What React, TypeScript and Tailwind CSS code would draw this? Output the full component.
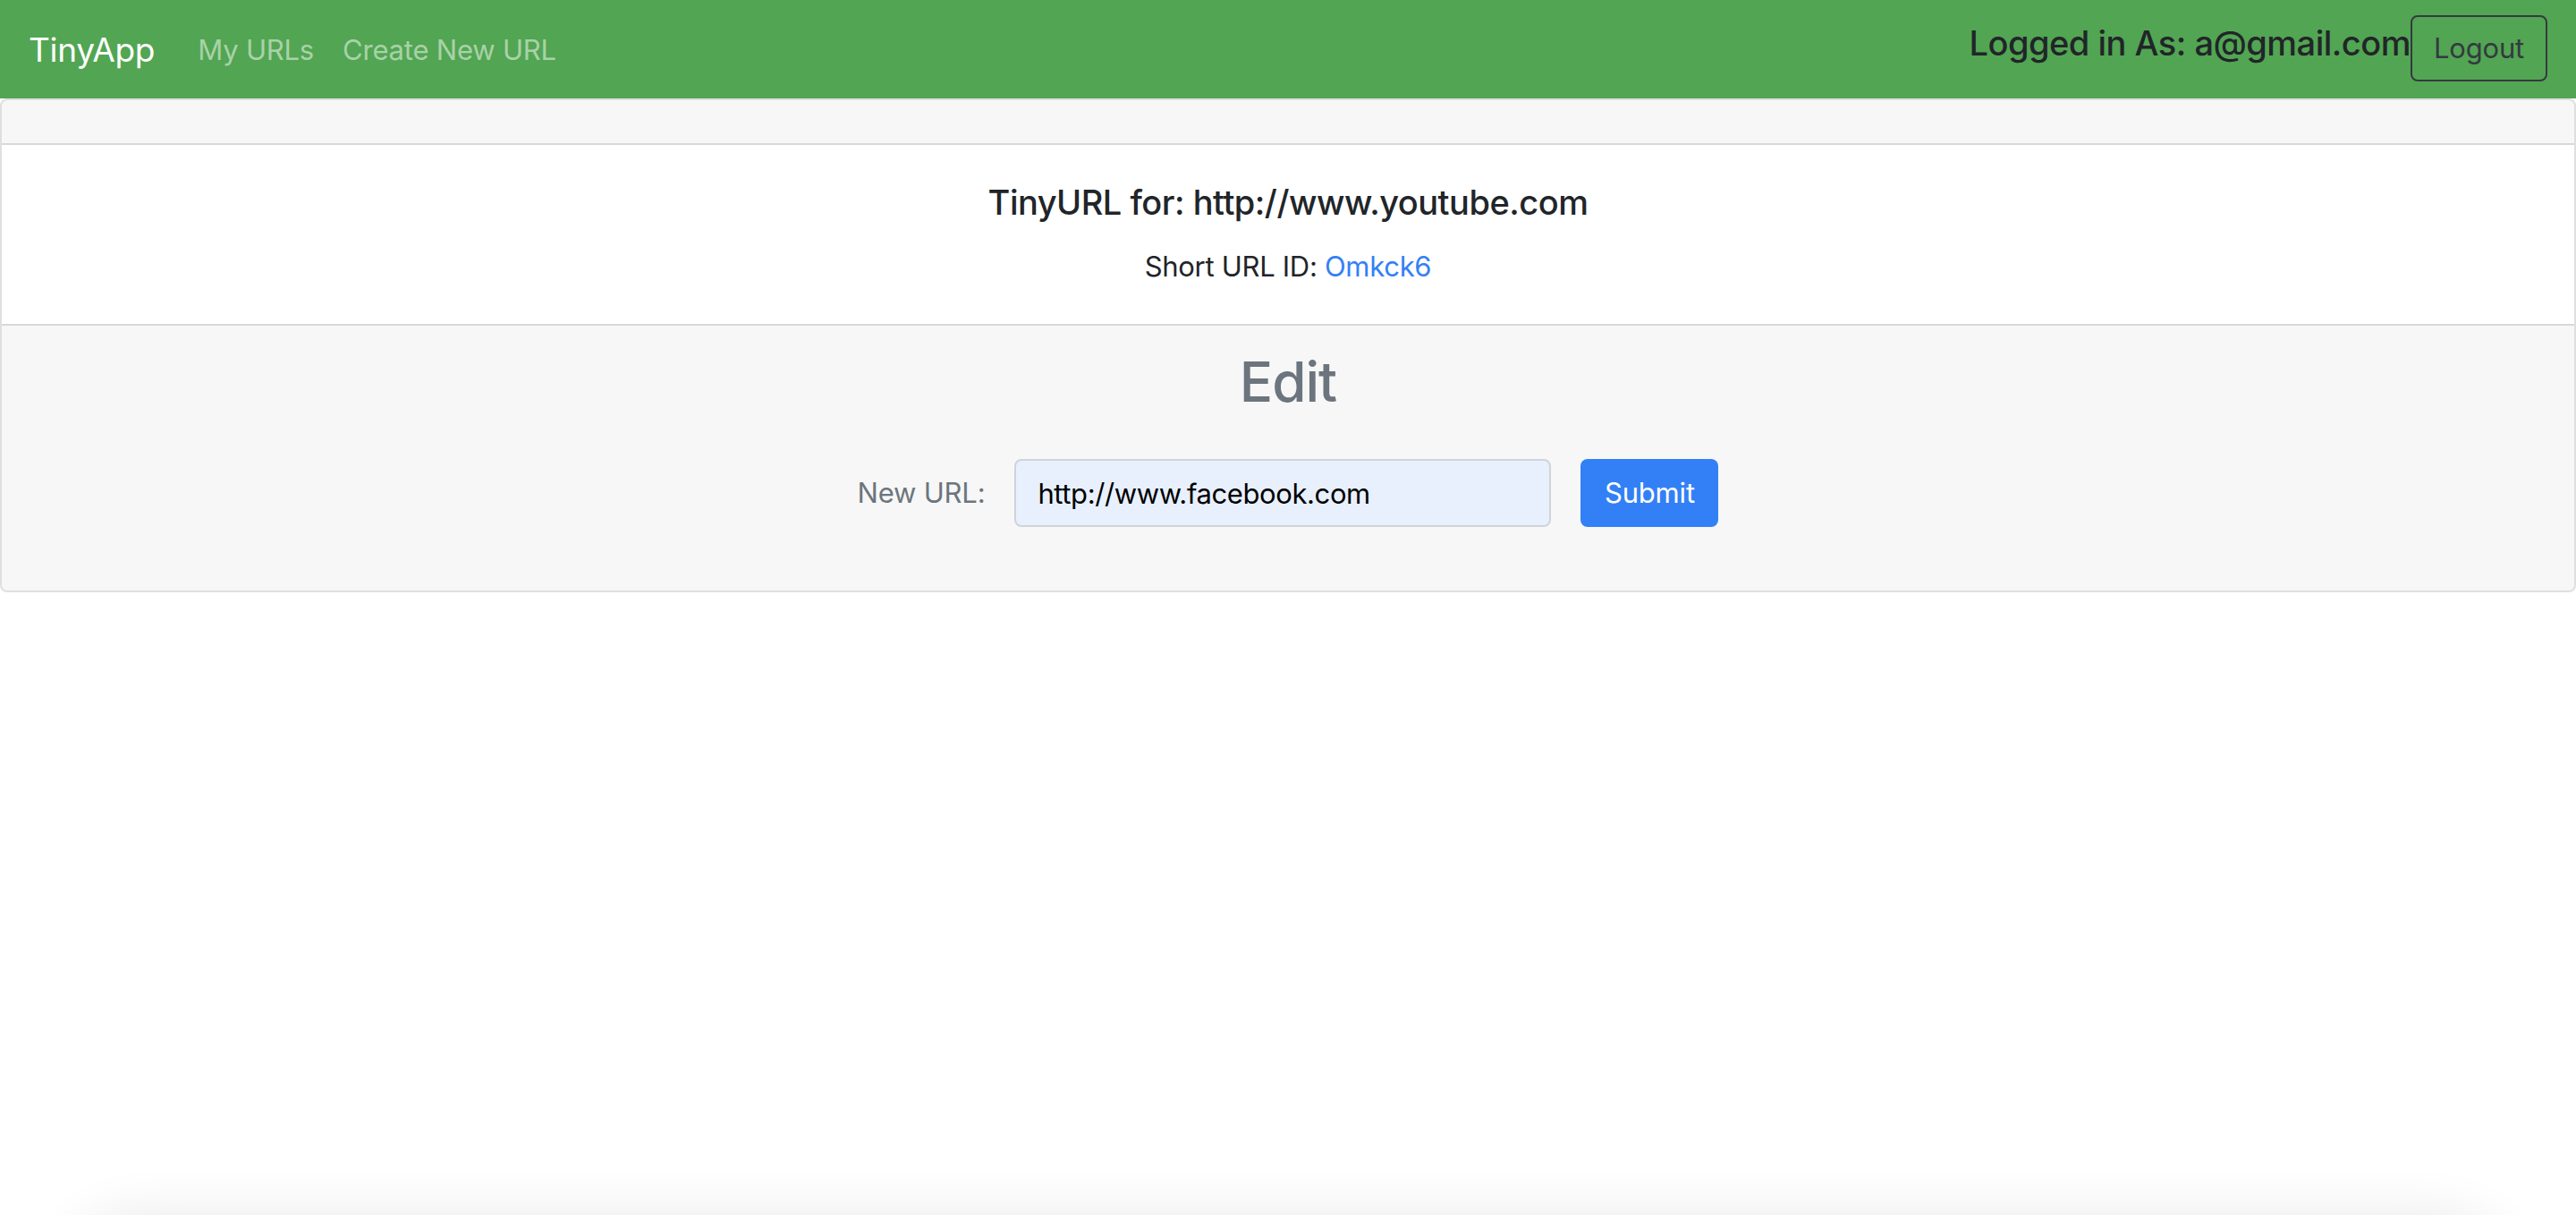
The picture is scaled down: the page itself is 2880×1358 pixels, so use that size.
import React from "react";

export default function App() {
  return (
    <div className="min-h-screen bg-white font-[Inter,sans-serif] text-[#212529]">
      <nav className="flex h-[110px] items-center justify-between bg-[#52a552] px-[32px]">
        <div className="flex items-center">
          <a className="mr-[32px] mt-[2px] text-[37px] leading-[1.5] tracking-[-0.3px] text-white" href="#">
            TinyApp
          </a>
          <a className="mt-[3px] px-[16px] text-[31px] leading-[1.5] tracking-[-0.2px] text-white/50" href="#">
            My URLs
          </a>
          <a className="mt-[3px] px-[16px] text-[31px] leading-[1.5] tracking-[-0.2px] text-white/50" href="#">
            Create New URL
          </a>
        </div>
        <div className="flex items-center">
          <h5 className="mb-[12px] text-[38px] font-medium leading-[1.2] tracking-[-0.5px] text-[#212529]">
            Logged in As: a@gmail.com
          </h5>
          <button className="mb-[2px] h-[74px] rounded-[8px] border-2 border-[#343a40] px-[24px] text-[31px] leading-[1.5] tracking-[-0.2px] text-[#343a40]">
            Logout
          </button>
        </div>
      </nav>

      <div className="rounded-[8px] border-2 border-black/[0.125]">
        <div className="h-[50px] rounded-t-[6px] border-b-2 border-black/[0.125] bg-black/[0.03]" />
        <div className="bg-white p-[40px] text-center">
          <h5 className="mb-[24px] text-[38px] font-medium leading-[48px] tracking-[-0.5px]">
            TinyURL for: http://www.youtube.com
          </h5>
          <p className="text-[31px] leading-[48px] tracking-[-0.3px]">
            Short URL ID: <a className="text-[#3380f6]" href="#">Omkck6</a>
          </p>
        </div>
        <div className="rounded-b-[6px] border-t-2 border-black/[0.125] bg-black/[0.03] px-[40px] pb-[71px] pt-[24px] text-center">
          <h2 className="mb-[48px] text-[62px] font-medium leading-[77px] tracking-[-1px] text-[#6c757d]">Edit</h2>
          <form className="flex items-center justify-center gap-[33px]" onSubmit={(e) => e.preventDefault()}>
            <label className="text-[31px] leading-[1.5] tracking-[-0.2px] text-[#6c757d]">New URL:</label>
            <input
              className="h-[76px] w-[600px] rounded-[8px] border-2 border-[#ced4da] bg-[#e8f0fe] px-[24px] text-[31px] leading-[1.5] tracking-[-0.4px] text-black outline-none"
              defaultValue="http://www.facebook.com"
            />
            <button className="h-[76px] w-[154px] rounded-[8px] bg-[#3380f6] text-[31px] leading-[1.5] tracking-[-0.2px] text-white">
              Submit
            </button>
          </form>
        </div>
      </div>

      <div className="pointer-events-none fixed left-[60px] right-[60px] top-full h-[200px] rounded-[100px] bg-white shadow-[0_0_60px_rgba(0,0,0,0.09)]" />
    </div>
  );
}
